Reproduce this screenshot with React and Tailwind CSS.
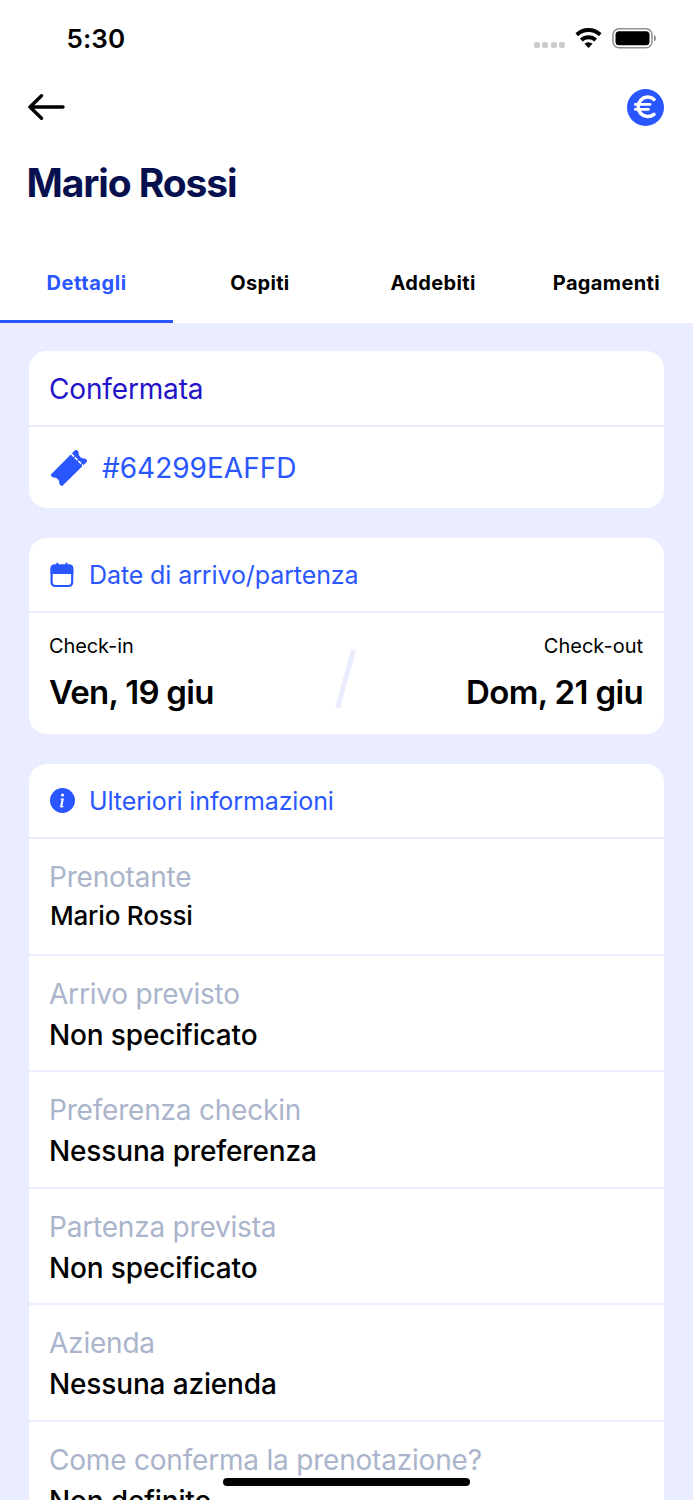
import { BsInfoCircleFill } from 'react-icons/bs';

const tabs = ['Dettagli', 'Ospiti', 'Addebiti', 'Pagamenti'];

const details = [
  { label: 'Prenotante', value: 'Mario Rossi', compact: true },
  { label: 'Arrivo previsto', value: 'Non specificato' },
  { label: 'Preferenza checkin', value: 'Nessuna preferenza' },
  { label: 'Partenza prevista', value: 'Non specificato' },
  { label: 'Azienda', value: 'Nessuna azienda' },
  { label: 'Come conferma la prenotazione?', value: 'Non definito' },
];

const StatusBar = () => (
  <div className="flex h-[76px] items-center justify-between pl-[66.5px] pr-9">
    <span className="text-[26px] font-semibold tracking-[0.1px]">5:30</span>
    <div className="flex items-center">
      <div className="mt-3.5 flex gap-[2.4px]">
        {[0, 1, 2, 3].map((dot) => (
          <span key={dot} className="h-1.5 w-1.5 rounded-[2px] bg-[#cccccc]" />
        ))}
      </div>
      <svg className="ml-2.5 h-5 w-[27px]" viewBox="0 0 27 20" fill="none" stroke="#000" strokeWidth="4">
        <path d="M1.8 6.7a17 17 0 0 1 23.4 0" />
        <path d="M6.3 12a10.5 10.5 0 0 1 14.4 0" />
        <path d="M13.5 20l-4-4.200a5.800 5.800 0 0 1 8 0z" fill="#000" stroke="none" />
      </svg>
      <svg className="ml-2.5 h-[21px] w-[45px]" viewBox="0 0 45 21">
        <rect x="1" y="0.8" width="39" height="19" rx="6" fill="none" stroke="#8f8f8f" strokeWidth="1.5" />
        <rect x="3.5" y="3.3" width="34" height="14" rx="3.5" fill="#000" />
        <path d="M42 7c2.6 1 2.6 5.6 0 6.6z" fill="#8f8f8f" />
      </svg>
    </div>
  </div>
);

const TicketIcon = () => (
  <svg className="h-[38px] w-[38px]" viewBox="0 0 38 38">
    <path
      d="M21.5 4.8L25 1.3a1.5 1.5 0 0 1 2.1 0l1.6 1.6c-0.8 3.7 2.8 7.3 6.5 6.5l1.5 1.5a1.5 1.5 0 0 1 0 2.1L12.500 36.700a1 1 0 0 1-1.400 0l-1.900-1.900c0.800-3.500-2.600-6.900-6.100-6.100L1.100 26.700a1 1 0 0 1 0-1.400z"
      fill="#2a56ff"
    />
    <path d="M21.3 4.900l11.800 11.800" fill="none" stroke="#fff" strokeWidth="1.6" strokeDasharray="3.8 1.2" />
  </svg>
);

const CalendarIcon = () => (
  <svg className="h-[26px] w-[26px]" viewBox="0 0 26 26" fill="none" stroke="#2a56ff">
    <rect x="2.6" y="3.6" width="20.6" height="20.4" rx="3.5" strokeWidth="2.2" />
    <path d="M1.5 12V6A3.5 3.5 0 0 1 5 2.5h15.800A3.500 3.500 0 0 1 24.300 6v6z" fill="#2a56ff" stroke="none" />
    <path d="M8.300 1.500v2M17.500 1.500v2" strokeWidth="2" strokeLinecap="round" />
  </svg>
);

const Card = ({ children }) => (
  <section className="overflow-hidden rounded-[18px] bg-white">{children}</section>
);

const App = () => {
  return (
    <div className="relative h-[1500px] w-[693px] overflow-hidden bg-[#eaedff] font-['Inter',sans-serif] text-black">
      <header className="h-[323px] bg-white">
        <StatusBar />
        <div className="flex h-[62px] items-center justify-between pl-7 pr-[29px]">
          <button>
            <svg className="h-[26px] w-[37px]" viewBox="0 0 37 26" fill="none" stroke="#000" strokeWidth="3.4" strokeLinecap="round" strokeLinejoin="round">
              <path d="M13.5 1.8L2 13l11.5 11.2M2 13h33" />
            </svg>
          </button>
          <button className="flex h-[37px] w-[37px] items-center justify-center rounded-full bg-[#2a56ff]">
            <svg className="h-[26px] w-[26px]" viewBox="0 0 26 26" fill="none" stroke="#fff" strokeWidth="3.5" strokeLinecap="round">
              <path d="M21 5.3A9.700 9.700 0 1 0 21 20.300" />
              <path d="M2.3 10.400h14.700M2.300 15.300h13.200" strokeWidth="2.8" />
            </svg>
          </button>
        </div>
        <h1 className="flex h-[90px] items-center pl-[26.5px] text-[39px] font-bold tracking-[-1.1px] text-[#06104f]">Mario Rossi</h1>
        <nav className="grid h-[95px] grid-cols-4">
          {tabs.map((tab, i) => (
            <button
              key={tab}
              className={`flex items-center justify-center border-b-[3px] pt-[17px] text-[20px] font-[650] ${i === 0 ? 'border-[#2a56ff] tracking-[0.6px] text-[#2a56ff]' : 'border-transparent tracking-[0.35px]'}`}
            >
              {tab}
            </button>
          ))}
        </nav>
      </header>

      <main className="flex flex-col gap-[30px] px-[29px] pt-7">
        <Card>
          <div className="flex h-[76px] items-center border-b-2 border-[#eaedff] pl-5 pt-0.5 text-[28px] tracking-[-0.15px] text-[#2313c9]">Confermata</div>
          <div className="flex h-[81px] items-center pl-[21px] text-[28px] text-[#2a56ff]">
            <TicketIcon />
            <span className="ml-3.5">#64299EAFFD</span>
          </div>
        </Card>

        <Card>
          <div className="flex h-[75px] items-center border-b-2 border-[#eaedff] pl-5 text-[25px] tracking-[-0.1px] text-[#2a56ff]">
            <CalendarIcon />
            <span className="ml-3.5 pt-0.5">Date di arrivo/partenza</span>
          </div>
          <div className="flex h-[121px] items-start justify-between pl-5 pr-[21px] pt-[21px]">
            <div className="w-[200px]">
              <p className="text-[20px] leading-6 tracking-[-0.1px]">Check-in</p>
              <p className="mt-3.5 text-[33px] font-semibold leading-10 tracking-[-0.75px]">Ven, 19 giu</p>
            </div>
            <svg className="mt-4 h-[58px] w-[22px]" viewBox="0 0 22 58" fill="none" stroke="#eaedff" strokeWidth="5">
              <path d="M18.5 0L2.5 58" />
            </svg>
            <div className="w-[200px] text-right">
              <p className="text-[20px] leading-6">Check-out</p>
              <p className="mt-3.5 text-[33px] font-semibold leading-10 tracking-[-0.65px]">Dom, 21 giu</p>
            </div>
          </div>
        </Card>

        <Card>
          <div className="flex h-[75px] items-center border-b-2 border-[#eaedff] pl-[21px] text-[25px] tracking-[-0.1px] text-[#2a56ff]">
            <BsInfoCircleFill className="h-[25px] w-[25px]" />
            <span className="ml-3.5 pt-0.5">Ulteriori informazioni</span>
          </div>
          {details.map((item) => (
            <div key={item.label} className="h-[116.6px] border-b-2 border-[#eaedff] pl-5 pt-[18px]">
              <p className="text-[28px] leading-10 tracking-[-0.2px] text-[#aab4cb]">{item.label}</p>
              <p className={item.compact ? 'pl-px text-[26px] font-[550] leading-[37px] tracking-[-0.2px]' : 'text-[28px] font-[550] leading-[42.6px] tracking-[-0.15px]'}>
                {item.value}
              </p>
            </div>
          ))}
        </Card>
      </main>

      {/* home indicator */}
      <div className="absolute bottom-[14px] left-[223px] h-2 w-[247px] rounded-full bg-black" />
    </div>
  );
};

export default App;
